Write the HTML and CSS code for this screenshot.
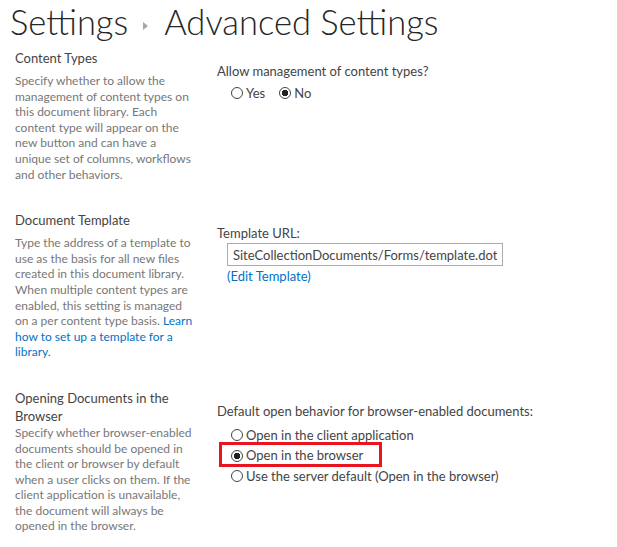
FILE: index.html
```html
<!Doctype html>
<html lang='en'>
<head>
    <meta charset='utf-8'>
    <title>Settings - Advanced Settings</title>
    <link rel="stylesheet" href="styles.css">
</head>
<body>
    <h1 class='page-title'>
        Settings<span class='crumb-arrow'></span>Advanced Settings
    </h1>

    <div class='section'>
        <div class='section-info'>
            <div class='section-title'>Content Types</div>
            <div class='section-desc'>Specify whether to allow the management of content types on this document library. Each content type will appear on the new button and can have a unique set of columns, workflows and other behaviors.</div>
        </div>
        <div class='section-body'>
            <div class='field-label'>Allow management of content types?</div>
            <div class='radio-inline'>
                <label class='radio'><input type='radio' name='ct'/>Yes</label>
                <label class='radio'><input type='radio' name='ct' checked/>No</label>
            </div>
        </div>
    </div>

    <div class='section'>
        <div class='section-info'>
            <div class='section-title'>Document Template</div>
            <div class='section-desc'>Type the address of a template to use as the basis for all new files created in this document library. When multiple content types are enabled, this setting is managed on a per content type basis. <a href='#'>Learn how to set up a template for a library.</a></div>
        </div>
        <div class='section-body'>
            <div class='field-label'>Template URL:</div>
            <input class='text-input' value='SiteCollectionDocuments/Forms/template.dotx'/>
            <div class='edit-link'><a href='#'>(Edit Template)</a></div>
        </div>
    </div>

    <div class='section'>
        <div class='section-info'>
            <div class='section-title'>Opening Documents in the Browser</div>
            <div class='section-desc'>Specify whether browser-enabled documents should be opened in the client or browser by default when a user clicks on them. If the client application is unavailable, the document will always be opened in the browser.</div>
        </div>
        <div class='section-body'>
            <div class='field-label'>Default open behavior for browser-enabled documents:</div>
            <div class='radio-list'>
                <label class='radio'><input type='radio' name='ob'/>Open in the client application</label>
                <label class='radio marked'><input type='radio' name='ob' checked/>Open in the browser</label>
                <label class='radio'><input type='radio' name='ob'/>Use the server default (Open in the browser)</label>
            </div>
        </div>
    </div>
</body>
</html>
```

FILE: styles.css
```css
html,
body {
    font-family: "Segoe UI", Lato, "Open Sans", sans-serif;
    font-size: 13px;
    color: #444444;
    background-color: #ffffff;
}

body {
    margin: 0;
    padding: 0 15px;
}

a {
    color: #0072c6;
    text-decoration: none;
}

.page-title {
    margin: 0 0 5px -5px;
    font-size: 34.5px;
    font-weight: 300;
    line-height: 44px;
    color: #262626;
    white-space: nowrap;
}
.crumb-arrow {
    display: inline-block;
    width: 0;
    height: 0;
    margin: 0 16px 0 15px;
    border-top: 4px solid transparent;
    border-bottom: 4px solid transparent;
    border-left: 5px solid #a6a6a6;
    vertical-align: middle;
}

.section {
    display: grid;
    grid-template-columns: 179px 1fr;
    column-gap: 23px;
    padding-bottom: 29px;
}
.section-title {
    font-size: 13px;
    line-height: 18px;
    min-height: 24px;
}
.section-desc {
    color: #777777;
    font-size: 12px;
    line-height: 15.6px;
}
.section-body {
    padding-top: 13px;
}

.field-label {
    line-height: 18px;
}

.radio-inline {
    display: flex;
    gap: 14px;
    padding-left: 14px;
    margin-top: 3px;
}
.radio-list {
    display: flex;
    flex-direction: column;
    padding-left: 14px;
    margin-top: 5px;
}
.radio {
    position: relative;
    display: flex;
    align-items: center;
    line-height: 20.5px;
}
.radio input {
    appearance: none;
    width: 12px;
    height: 12px;
    margin: 0 3px 0 0;
    border: 1px solid #444444;
    border-radius: 50%;
    background: #ffffff;
}
.radio input:checked {
    background: radial-gradient(circle, #222222 0 3px, #ffffff 3.5px);
}
/* red box drawn round the chosen option */
.marked::after {
    content: '';
    position: absolute;
    left: -12px;
    top: -3px;
    width: 157px;
    height: 19px;
    border: 3px solid #e8141e;
}

.text-input {
    display: block;
    width: 276px;
    height: 23px;
    margin: 1px 0 0 10px;
    padding: 0 5px;
    box-sizing: border-box;
    border: 1px solid #ababab;
    font-family: inherit;
    font-size: 13px;
    color: #444444;
}
.edit-link {
    margin-left: 10px;
    line-height: 21px;
}
```
